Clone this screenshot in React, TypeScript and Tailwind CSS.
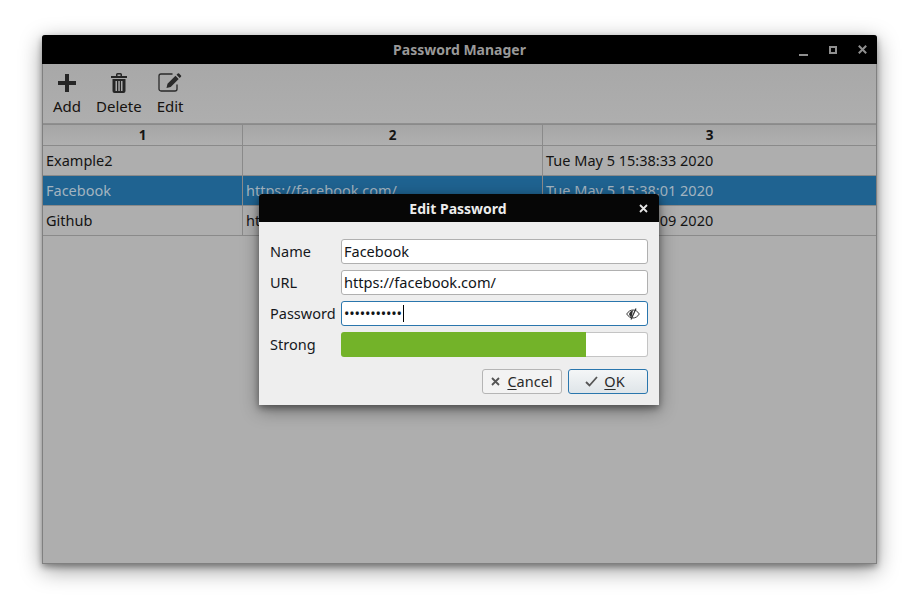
import React from "react";

const font = "[font-family:'Noto_Sans','DejaVu_Sans',sans-serif]";

function ToolButton({ label, icon }: { label: string; icon: React.ReactNode }) {
  return (
    <div className="flex flex-col items-center">
      <div className="h-[24px] flex items-center justify-center">{icon}</div>
      <div className="text-[15px] leading-[20px] mt-[1px] text-[#16120f]">{label}</div>
    </div>
  );
}

function HeadCell({ children, w, last }: { children: React.ReactNode; w: string; last?: boolean }) {
  return (
    <div
      className={`${w} h-[21px] flex items-center justify-center pt-[1px] text-[13.5px] font-bold text-[#141414] border-b border-[#8a8a8a] ${
        last ? "" : "border-r"
      } bg-gradient-to-b from-[#a6a6a6] to-[#b0b0b0]`}
    >
      {children}
    </div>
  );
}

function Cell({ children, w, last, selected }: { children?: React.ReactNode; w: string; last?: boolean; selected?: boolean }) {
  return (
    <div
      className={`${w} h-[30px] flex items-center pl-[3px] overflow-hidden whitespace-nowrap text-[14.5px] border-b border-[#8a8a8a] ${
        last ? "" : "border-r"
      } ${selected ? "bg-[#1f6391] text-[#a3b4c0]" : "text-[#141414]"}`}
    >
      {children}
    </div>
  );
}

function Row({ a, b, c, selected }: { a: string; b: string; c: string; selected?: boolean }) {
  return (
    <div className="flex">
      <Cell w="w-[200px]" selected={selected}>{a}</Cell>
      <Cell w="w-[300px]" selected={selected}>{b}</Cell>
      <Cell w="flex-1" last selected={selected}>{c}</Cell>
    </div>
  );
}

function Field({ label, children }: { label: string; children: React.ReactNode }) {
  return (
    <div className="flex items-center h-[25px]">
      <div className="w-[71px] text-[14.5px] text-[#15181c]">{label}</div>
      {children}
    </div>
  );
}

export default function App() {
  return (
    <div className={`relative w-[919px] h-[598px] overflow-hidden bg-white pt-[35px] pl-[42px] ${font}`}>
      <div className="w-[835px] h-[529px] rounded-t-[3px] flex flex-col bg-[#aeaeae] border-x border-b border-[#808080] shadow-[0_3px_6px_rgba(0,0,0,0.35),0_6px_22px_rgba(0,0,0,0.4)]">
        <div className="relative h-[29px] -mx-px bg-black rounded-t-[3px] flex items-center justify-center text-[14px] font-bold text-[#999999]">
          Password Manager
          <div className="absolute right-[10px] top-0 h-full flex items-center gap-[21px]">
            <div className="w-[9px] h-[9px] flex items-end"><div className="w-[9px] h-[2px] bg-[#8f8f8f] translate-y-[2px]" /></div>
            <div className="w-[8px] h-[8px] border-2 border-[#8f8f8f]" />
            <svg width="9" height="9" viewBox="0 0 9 9"><path d="M0.800 0.800l7.400 7.400M8.200 0.800l-7.400 7.400" stroke="#8f8f8f" strokeWidth="2" /></svg>
          </div>
        </div>

        <div className="h-[60px] flex items-start pt-[7px] pl-[10px] gap-[15px] border-b border-[#8f8f8f] bg-gradient-to-b from-[#a8a8a8] to-[#aeaeae]">
          <ToolButton
            label="Add"
            icon={
              <svg width="18" height="18" viewBox="0 0 18 18">
                <path d="M7 0h4v7h7v4h-7v7H7v-7H0V7h7z" fill="#262626" />
              </svg>
            }
          />
          <ToolButton
            label="Delete"
            icon={
              <svg width="18" height="20" viewBox="0 0 18 20" fill="#262626">
                <path d="M6 1.500A1.500 1.500 0 0 1 7.500 0h3A1.500 1.500 0 0 1 12 1.500V3h5v2H1V3h5zM7.500 1.400V3h3V1.400z" fillRule="evenodd" />
                <path fillRule="evenodd" d="M2.500 6h13v12a2 2 0 0 1-2 2h-9a2 2 0 0 1-2-2zM5.500 8v10h1.500V8zM8.300 8v10h1.500V8zM11 8v10h1.500V8z" />
              </svg>
            }
          />
          <ToolButton
            label="Edit"
            icon={
              <svg width="24" height="20" viewBox="0 0 24 20" fill="none">
                <path d="M19 11.500V16a2 2 0 0 1-2 2H3a2 2 0 0 1-2-2V3a2 2 0 0 1 2-2h11.500" stroke="#2a2a2a" strokeWidth="1.300" />
                <path d="M8.500 15l1-4.200 8-8 3.200 3.200-8 8zM18.500 1.800l1.300-1.300a1 1 0 0 1 1.300 0l1.900 1.900a1 1 0 0 1 0 1.300l-1.300 1.300z" fill="#2a2a2a" />
              </svg>
            }
          />
        </div>

        <div className="border-t border-[#8a8a8a]">
          <div className="flex">
            <HeadCell w="w-[200px]">1</HeadCell>
            <HeadCell w="w-[300px]">2</HeadCell>
            <HeadCell w="flex-1" last>3</HeadCell>
          </div>
          <div>
            <Row a="Example2" b="" c="Tue May 5 15:38:33 2020" />
            <Row a="Facebook" b="https://facebook.com/" c="Tue May 5 15:38:01 2020" selected />
            <Row a="Github" b="https://github.com/" c="Tue May 5 15:38:09 2020" />
          </div>
        </div>
      </div>

      <div className="absolute left-[259px] top-[194px] w-[400px] h-[211px] bg-[#eeeeee] rounded-t-[3px] flex flex-col shadow-[0_3px_6px_rgba(0,0,0,0.35),0_5px_18px_rgba(0,0,0,0.4)]">
        <div className="relative h-[28px] bg-[#060606] rounded-t-[3px] flex items-center justify-center text-[14px] font-bold text-[#ececec]">
          <span className="-translate-x-[1px]">Edit Password</span>
          <svg className="absolute right-[11px] top-[10px]" width="9" height="9" viewBox="0 0 9 9">
            <path d="M1 1l7 7M8 1l-7 7" stroke="#e4e4e4" strokeWidth="1.800" />
          </svg>
        </div>
        <div className="flex flex-col gap-[6px] pt-[17px] pl-[11px] pr-[11px]">
          <Field label="Name">
            <div className="w-[307px] h-[25px] rounded-[3px] bg-white border border-[#b0b0b0] pl-[2px] flex items-center text-[14.5px] text-[#101418]">Facebook</div>
          </Field>
          <Field label="URL">
            <div className="w-[307px] h-[25px] rounded-[3px] bg-white border border-[#b0b0b0] pl-[2px] flex items-center text-[14.6px] text-[#101418]">https://facebook.com/</div>
          </Field>
          <Field label="Password">
            <div className="w-[307px] h-[25px] rounded-[3px] bg-white border border-[#2a76ad] pl-[2px] pr-[7px] flex items-center text-[#101418]">
              <span className="text-[14.5px] tracking-[-0.2px] leading-none">•••••••••••</span>
              <span className="w-px h-[17px] bg-black ml-[1px]" />
              <svg className="ml-auto" width="14" height="12" viewBox="0 0 14 12" fill="none">
                <path d="M0.700 6C2.500 3.200 4.600 2 7 2s4.500 1.200 6.300 4C11.500 8.800 9.400 10 7 10S2.500 8.800.7 6z" stroke="#3a3a3a" strokeWidth="1" />
                <path d="M3 6c.8-2 2.200-3.500 4-3.800L5.500 9.500C4 8.700 3.400 7.500 3 6z" fill="#2f2f2f" />
                <path d="M10 0.500L5 11.500" stroke="#2f2f2f" strokeWidth="1.200" />
              </svg>
            </div>
          </Field>
          <Field label="Strong">
            <div className="w-[307px] h-[25px] flex">
              <div className="w-[245px] h-full bg-[#73b329] rounded-l-[3px]" />
              <div className="flex-1 h-full bg-white border border-l-0 border-[#c4c4c4] rounded-r-[3px]" />
            </div>
          </Field>
        </div>
        <div className="flex justify-end gap-[6px] pt-[12px] pr-[11px]">
          <div className="w-[80px] h-[25px] rounded-[3px] border border-[#b5b5b5] bg-[#f3f3f3] flex items-center justify-center gap-[7px] text-[14.5px] text-[#2a2a2a]">
            <svg width="9" height="9" viewBox="0 0 9 9"><path d="M1 1l7 7M8 1l-7 7" stroke="#555555" strokeWidth="1.800" /></svg>
            <span><span className="underline underline-offset-2">C</span>ancel</span>
          </div>
          <div className="w-[80px] h-[25px] rounded-[3px] border border-[#2a76ad] bg-gradient-to-b from-[#f4f6f7] to-[#dfe5e9] flex items-center justify-center gap-[6px] pr-[6px] text-[14.5px] text-[#2a2a2a]">
            <svg width="13" height="11" viewBox="0 0 13 11" fill="none"><path d="M1 6l3.500 3.500L12 1" stroke="#555555" strokeWidth="1.800" /></svg>
            <span><span className="underline underline-offset-2">O</span>K</span>
          </div>
        </div>
      </div>
    </div>
  );
}
